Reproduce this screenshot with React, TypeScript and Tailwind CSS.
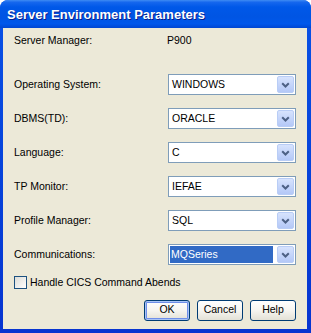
import React from "react";

const font = { fontFamily: '"Liberation Sans", Arial, sans-serif' };

function Chevron() {
  return (
    <svg width="9" height="6" viewBox="0 0 9 6">
      <path d="M1.2 1.2 L4.5 4.5 L7.8 1.2" fill="none" stroke="#4D6185" strokeWidth="2" />
    </svg>
  );
}

function Combo({ value, selected }: { value: string; selected?: boolean }) {
  return (
    <div className="flex h-[21px] w-[128px] items-stretch border border-[#7F9DB9] bg-white">
      <div className="flex flex-1 items-stretch p-[1px]">
        {selected ? (
          <div className="mr-[2px] flex flex-1 items-center bg-[#316AC5] pl-[1px] text-[10.5px] text-white">
            {value}
          </div>
        ) : (
          <div className="flex flex-1 items-center pl-[2px] text-[10.5px] text-black">{value}</div>
        )}
      </div>
      <div className="m-[1px] flex w-[17px] items-center justify-center rounded-[2px] border border-[#B9CDF6] bg-gradient-to-b from-[#D7E3FD] to-[#B4C8F7]">
        <Chevron />
      </div>
    </div>
  );
}

function Row({ label, value, selected }: { label: string; value: string; selected?: boolean }) {
  return (
    <div className="flex h-[21px] items-center">
      <div className="w-[154px] text-[10.5px] text-black">{label}</div>
      <Combo value={value} selected={selected} />
    </div>
  );
}

function Btn({ label, def }: { label: string; def?: boolean }) {
  return (
    <div
      className={
        "flex h-[21px] w-[46px] items-center justify-center rounded-[3px] border border-[#003C74] bg-gradient-to-b from-[#FFFFFF] via-[#F6F5F0] to-[#E3E1D6] text-[10.5px] text-black " +
        (def ? "shadow-[inset_0_0_0_1px_#A9C4F5,inset_0_0_0_2px_#6F8FE9]" : "")
      }
    >
      {label}
    </div>
  );
}

export default function App() {
  return (
    <div style={font} className="h-[333px] w-[311px] overflow-hidden">
      <div className="flex h-[333px] w-[311px] flex-col rounded-t-[8px] bg-gradient-to-b from-[#0A52E6] to-[#0734D0]">
        <div className="flex h-[28px] items-center rounded-t-[8px] bg-[linear-gradient(to_bottom,#3F8CF3_0%,#1667EE_8%,#0058E8_25%,#0055E3_60%,#0057EB_85%,#0046D2_100%)] pl-[7px] pt-[1px]">
          <span className="text-[13px] font-bold text-white [text-shadow:1px_1px_0_#0A1E8C]">
            Server Environment Parameters
          </span>
        </div>
        <div className="mx-[3px] mb-[4px] mr-[4px] flex flex-1 flex-col bg-[#ECE9D8] pl-[11px] pr-[11px]">
          <div className="mt-[3px] flex h-[20px] items-center">
            <div className="w-[153px] text-[10.5px] text-black">Server Manager:</div>
            <div className="text-[10.5px] text-black">P900</div>
          </div>
          <div className="mt-[23px] flex flex-col gap-[13px]">
            <Row label="Operating System:" value="WINDOWS" />
            <Row label="DBMS(TD):" value="ORACLE" />
            <Row label="Language:" value="C" />
            <Row label="TP Monitor:" value="IEFAE" />
            <Row label="Profile Manager:" value="SQL" />
            <Row label="Communications:" value="MQSeries" selected />
          </div>
          <div className="mt-[10px] flex items-center gap-[3px]">
            <div className="h-[13px] w-[13px] border border-[#1C5180] bg-gradient-to-br from-[#DCDCD7] to-[#FFFFFF]" />
            <span className="text-[10.5px] text-black">Handle CICS Command Abends</span>
          </div>
          <div className="mt-[9px] flex justify-end gap-[7px]">
            <Btn label="OK" def />
            <Btn label="Cancel" />
            <Btn label="Help" />
          </div>
        </div>
      </div>
    </div>
  );
}
